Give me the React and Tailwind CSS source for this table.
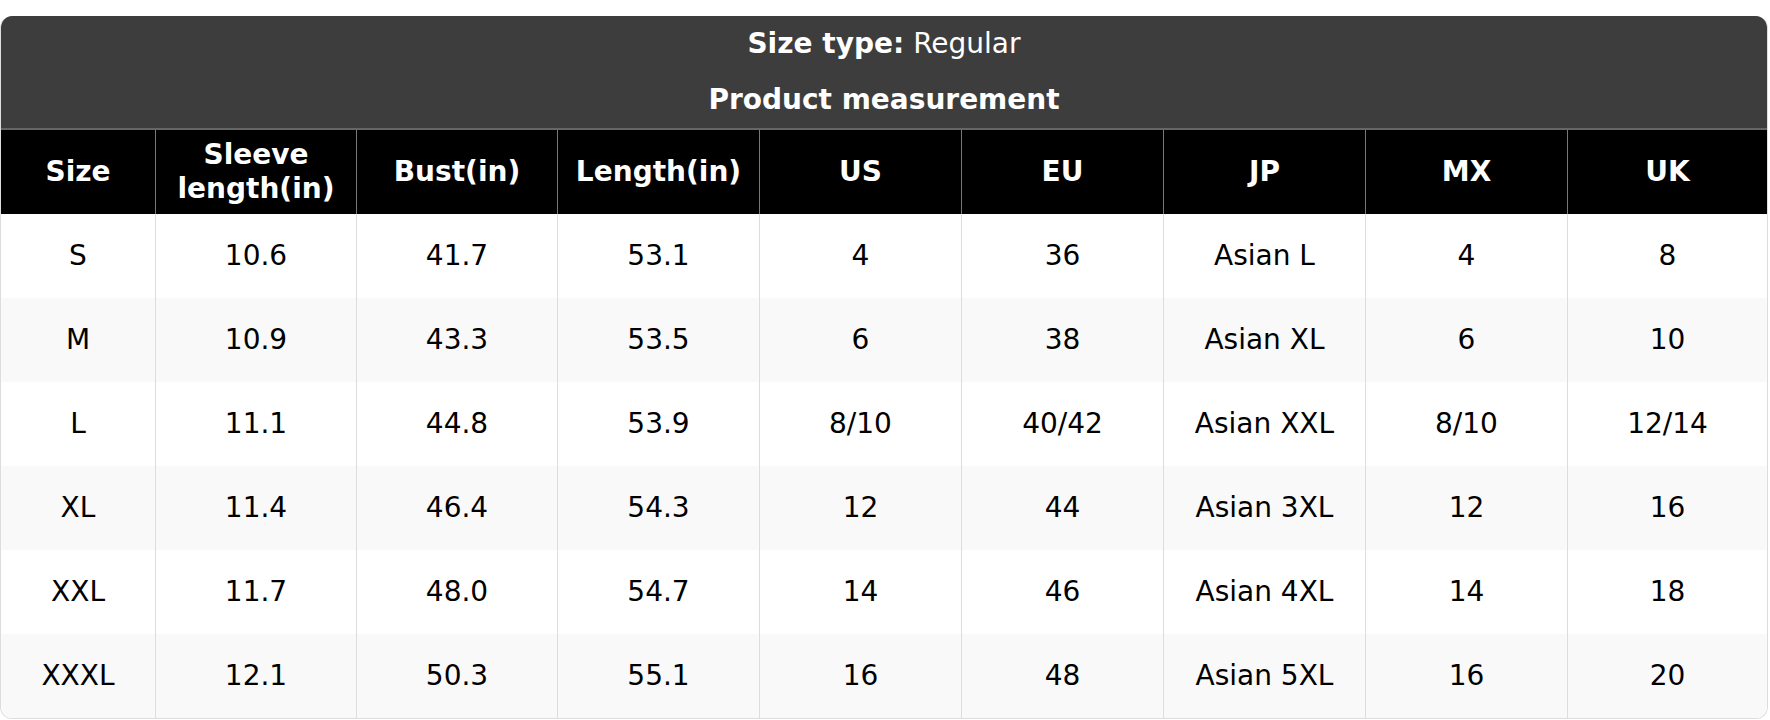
import React from 'react';

const columns = ['Size', 'Sleeve length(in)', 'Bust(in)', 'Length(in)', 'US', 'EU', 'JP', 'MX', 'UK'];

const rows = [
  ['S', '10.6', '41.7', '53.1', '4', '36', 'Asian L', '4', '8'],
  ['M', '10.9', '43.3', '53.5', '6', '38', 'Asian XL', '6', '10'],
  ['L', '11.1', '44.8', '53.9', '8/10', '40/42', 'Asian XXL', '8/10', '12/14'],
  ['XL', '11.4', '46.4', '54.3', '12', '44', 'Asian 3XL', '12', '16'],
  ['XXL', '11.7', '48.0', '54.7', '14', '46', 'Asian 4XL', '14', '18'],
  ['XXXL', '12.1', '50.3', '55.1', '16', '48', 'Asian 5XL', '16', '20'],
];

const gridCols = 'grid grid-cols-[154px_201px_201px_202px_202px_202px_202px_202px_minmax(0,1fr)]';

export default function App() {
  return (
    <div className="bg-white pt-4 pr-[2px] font-['DejaVu_Sans','Liberation_Sans',sans-serif] text-[28px] leading-[1.2]">
      <div className="rounded-[12px] border border-[#dddddd] border-t-0 overflow-hidden">
        {/* Title bar */}
        <div className="bg-[#3d3d3d] text-white">
          <div className="h-[56px] flex items-center justify-center">
            <span className="font-bold">Size type:</span>
            <span className="ml-[9px]">Regular</span>
          </div>
          <div className="h-[56px] flex items-center justify-center font-bold">
            Product measurement
          </div>
        </div>

        {/* Column headers */}
        <div className={`${gridCols} bg-black text-white font-bold border-t-2 border-[#666666]`}>
          {columns.map((col, i) => (
            <div
              key={col}
              className={`h-[84px] flex items-center justify-center text-center px-2 ${
                i > 0 ? 'border-l border-[#777777]' : ''
              }`}
            >
              {col === 'Sleeve length(in)' ? (
                <span>
                  Sleeve
                  <br />
                  length(in)
                </span>
              ) : (
                col
              )}
            </div>
          ))}
        </div>

        {/* Data rows */}
        {rows.map((row, r) => (
          <div
            key={row[0]}
            className={`${gridCols} text-black ${r % 2 === 1 ? 'bg-[#f9f9f9]' : 'bg-white'}`}
          >
            {row.map((cell, i) => (
              <div
                key={i}
                className={`h-[84px] flex items-center justify-center ${
                  i > 0 ? 'border-l border-[#dddddd]' : ''
                }`}
              >
                {cell}
              </div>
            ))}
          </div>
        ))}
      </div>
    </div>
  );
}
